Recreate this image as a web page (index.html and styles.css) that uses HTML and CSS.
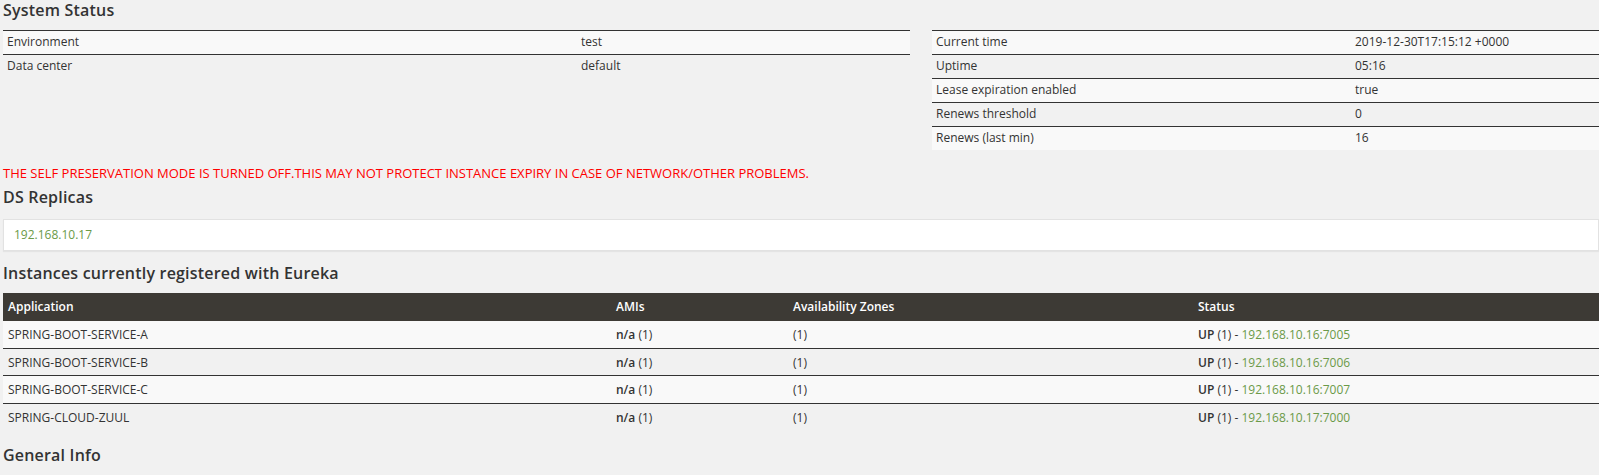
FILE: index.html
```html
<!DOCTYPE html>
<html lang="en">

<head>
    <meta charset="UTF-8">
    <meta name="viewport" content="width=device-width, initial-scale=1.0">
    <title>Eureka</title>
    <link rel="stylesheet" href="styles.css">
</head>

<body>
    <h1 class="section-title first">System Status</h1>

    <div class="status-row">
        <table class="info-table left-info">
            <tr>
                <td>Environment</td>
                <td>test</td>
            </tr>
            <tr>
                <td>Data center</td>
                <td>default</td>
            </tr>
        </table>

        <table class="info-table right-info">
            <tr>
                <td>Current time</td>
                <td>2019-12-30T17:15:12 +0000</td>
            </tr>
            <tr>
                <td>Uptime</td>
                <td>05:16</td>
            </tr>
            <tr>
                <td>Lease expiration enabled</td>
                <td>true</td>
            </tr>
            <tr>
                <td>Renews threshold</td>
                <td>0</td>
            </tr>
            <tr>
                <td>Renews (last min)</td>
                <td>16</td>
            </tr>
        </table>
    </div>

    <!-- self preservation warning -->
    <p class="warning">THE SELF PRESERVATION MODE IS TURNED OFF.THIS MAY NOT PROTECT INSTANCE EXPIRY IN CASE OF NETWORK/OTHER PROBLEMS.</p>

    <h1 class="section-title">DS Replicas</h1>
    <ul class="replicas">
        <li><a href="#">192.168.10.17</a></li>
    </ul>

    <h1 class="section-title">Instances currently registered with Eureka</h1>
    <table class="instances">
        <thead>
            <tr>
                <th class="col-app">Application</th>
                <th class="col-ami">AMIs</th>
                <th class="col-zone">Availability Zones</th>
                <th>Status</th>
            </tr>
        </thead>
        <tbody>
            <tr>
                <td>SPRING-BOOT-SERVICE-A</td>
                <td><b>n/a</b> (1)</td>
                <td>(1)</td>
                <td><b>UP</b> (1) - <a href="#">192.168.10.16:7005</a></td>
            </tr>
            <tr>
                <td>SPRING-BOOT-SERVICE-B</td>
                <td><b>n/a</b> (1)</td>
                <td>(1)</td>
                <td><b>UP</b> (1) - <a href="#">192.168.10.16:7006</a></td>
            </tr>
            <tr>
                <td>SPRING-BOOT-SERVICE-C</td>
                <td><b>n/a</b> (1)</td>
                <td>(1)</td>
                <td><b>UP</b> (1) - <a href="#">192.168.10.16:7007</a></td>
            </tr>
            <tr>
                <td>SPRING-CLOUD-ZUUL</td>
                <td><b>n/a</b> (1)</td>
                <td>(1)</td>
                <td><b>UP</b> (1) - <a href="#">192.168.10.17:7000</a></td>
            </tr>
        </tbody>
    </table>

    <h1 class="section-title">General Info</h1>
</body>

</html>
```

FILE: styles.css
```css
/* General Styles */
body {
    background-color: #f1f1f1;
    color: #333333;
    font-family: "Open Sans", "Liberation Sans", sans-serif;
    font-size: 12px;
    margin: 0;
    padding: 0 0 0 3px;
    overflow: hidden;
}

a {
    color: #6b9a48;
    text-decoration: none;
}

b {
    font-weight: 600;
}

.section-title {
    font-size: 16px;
    font-weight: 600;
    letter-spacing: 0.2px;
    color: #333333;
    margin: 0;
    line-height: 20px;
    padding: 12px 0 10px;
}

.section-title.first {
    padding-top: 0;
}

/* heading right under the warning sits closer */
.warning + .section-title {
    padding: 6px 0 12px;
}

/* System status tables */
.status-row {
    display: grid;
    grid-template-columns: 907px 1fr;
    column-gap: 22px;
    align-items: start;
}

table {
    border-collapse: collapse;
}

.info-table {
    width: 100%;
}

.info-table td {
    height: 21px;
    padding: 0 4px 2px;
    border-top: 1px solid #333333;
}

.info-table tr:nth-child(odd) td {
    background-color: #f9f9f9;
}

.left-info td:first-child {
    width: 566px;
}

.right-info td:first-child {
    width: 411px;
}

.warning {
    color: #ff0000;
    font-size: 13px;
    margin: 15px 0 0;
    line-height: 16px;
}

/* DS Replicas box */
.replicas {
    list-style: none;
    margin: 0;
    padding: 0 10px;
    height: 30px;
    line-height: 30px;
    background-color: #ffffff;
    border: 1px solid #e2e2e2;
    box-shadow: 0 1px 1px rgba(0, 0, 0, 0.05);
}

/* Instances table */
.instances {
    width: 100%;
    margin-bottom: 2px;
}

.instances th {
    background-color: #3d3a35;
    color: #ffffff;
    font-weight: 600;
    text-align: left;
    height: 27px;
    padding: 0 5px;
}

.instances td {
    height: 26.7px;
    padding: 0 5px;
    border-top: 1px solid #333333;
}

.instances tbody tr:first-child td {
    border-top-color: #3d3a35;
}

.instances tbody tr:nth-child(odd) td {
    background-color: #f9f9f9;
}

.col-app {
    width: 598px;
}

.col-ami {
    width: 167px;
}

.col-zone {
    width: 395px;
}
```
